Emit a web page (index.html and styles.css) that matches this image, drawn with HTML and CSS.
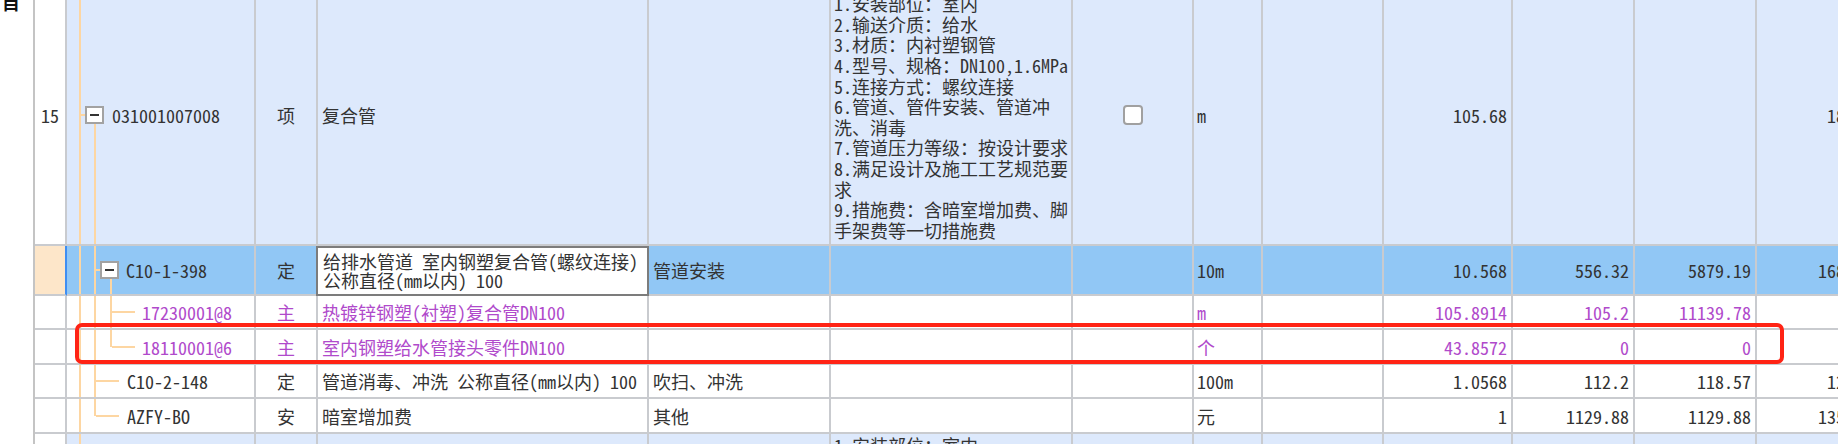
FILE: index.html
```html
<!DOCTYPE html>
<html lang="zh-CN">
<head>
<meta charset="utf-8">
<title>清单</title>
<link rel="stylesheet" href="styles.css">
</head>
<body>
<div class="page">
  <div class="side"><div class="side-title">目</div></div>
  <div class="table">
    <div class="row row-item">
      <div class="cell num">15</div>
      <div class="cell code tree-15"><span class="exp"></span><span>031001007008</span></div>
      <div class="cell type">项</div>
      <div class="cell">复合管</div>
      <div class="cell"></div>
      <div class="cell feat">
        <div>1.安装部位：室内</div>
        <div>2.输送介质：给水</div>
        <div>3.材质：内衬塑钢管</div>
        <div>4.型号、规格：DN100,1.6MPa</div>
        <div>5.连接方式：螺纹连接</div>
        <div>6.管道、管件安装、管道冲</div>
        <div>洗、消毒</div>
        <div>7.管道压力等级：按设计要求</div>
        <div>8.满足设计及施工工艺规范要</div>
        <div>求</div>
        <div>9.措施费：含暗室增加费、脚</div>
        <div>手架费等一切措施费</div>
      </div>
      <div class="cell chk"><span class="box"></span></div>
      <div class="cell unit">m</div>
      <div class="cell"></div>
      <div class="cell n">105.68</div>
      <div class="cell n"></div>
      <div class="cell n"></div>
      <div class="cell n">183.46</div>
    </div>

    <div class="row row-sel">
      <div class="cell num"></div>
      <div class="cell code tree-sel"><span class="exp"></span><span>C10-1-398</span></div>
      <div class="cell type">定</div>
      <div class="cell edit"><div>给排水管道 室内钢塑复合管(螺纹连接)<br>公称直径(mm以内) 100</div></div>
      <div class="cell">管道安装</div>
      <div class="cell"></div>
      <div class="cell"></div>
      <div class="cell unit">10m</div>
      <div class="cell"></div>
      <div class="cell n">10.568</div>
      <div class="cell n">556.32</div>
      <div class="cell n">5879.19</div>
      <div class="cell n">1683.52</div>
    </div>

    <div class="row row-sub h34 purple">
      <div class="cell num"></div>
      <div class="cell code tree-m1">17230001@8</div>
      <div class="cell type">主</div>
      <div class="cell">热镀锌钢塑(衬塑)复合管DN100</div>
      <div class="cell"></div>
      <div class="cell"></div>
      <div class="cell"></div>
      <div class="cell unit">m</div>
      <div class="cell"></div>
      <div class="cell n">105.8914</div>
      <div class="cell n">105.2</div>
      <div class="cell n">11139.78</div>
      <div class="cell n"></div>
    </div>

    <div class="row row-sub h35 purple">
      <div class="cell num"></div>
      <div class="cell code tree-m2">18110001@6</div>
      <div class="cell type">主</div>
      <div class="cell">室内钢塑给水管接头零件DN100</div>
      <div class="cell"></div>
      <div class="cell"></div>
      <div class="cell"></div>
      <div class="cell unit">个</div>
      <div class="cell"></div>
      <div class="cell n">43.8572</div>
      <div class="cell n">0</div>
      <div class="cell n">0</div>
      <div class="cell n"></div>
    </div>

    <div class="row row-sub h34">
      <div class="cell num"></div>
      <div class="cell code tree-d1">C10-2-148</div>
      <div class="cell type">定</div>
      <div class="cell">管道消毒、冲洗 公称直径(mm以内) 100</div>
      <div class="cell">吹扫、冲洗</div>
      <div class="cell"></div>
      <div class="cell"></div>
      <div class="cell unit">100m</div>
      <div class="cell"></div>
      <div class="cell n">1.0568</div>
      <div class="cell n">112.2</div>
      <div class="cell n">118.57</div>
      <div class="cell n">124.85</div>
    </div>

    <div class="row row-sub h35">
      <div class="cell num"></div>
      <div class="cell code tree-d2">AZFY-BO</div>
      <div class="cell type">安</div>
      <div class="cell">暗室增加费</div>
      <div class="cell">其他</div>
      <div class="cell"></div>
      <div class="cell"></div>
      <div class="cell unit">元</div>
      <div class="cell"></div>
      <div class="cell n">1</div>
      <div class="cell n">1129.88</div>
      <div class="cell n">1129.88</div>
      <div class="cell n">1355.86</div>
    </div>

    <div class="row row-next">
      <div class="cell num"></div>
      <div class="cell code tree-v"></div>
      <div class="cell type"></div>
      <div class="cell"></div>
      <div class="cell"></div>
      <div class="cell feat top">
        <div>1.安装部位：室内</div>
        <div>2.输送介质：给水</div>
      </div>
      <div class="cell"></div>
      <div class="cell unit"></div>
      <div class="cell"></div>
      <div class="cell n"></div>
      <div class="cell n"></div>
      <div class="cell n"></div>
      <div class="cell n"></div>
    </div>

    <div class="mark"></div>
  </div>
</div>
</body>
</html>
```

FILE: styles.css
```css
html, body {
  margin: 0;
  padding: 0;
  width: 1838px;
  height: 444px;
  overflow: hidden;
  background: #ffffff;
}

.page {
  display: flex;
  align-items: flex-start;
  font-family: "Noto Sans Mono CJK SC", "Noto Sans CJK SC", sans-serif;
  font-size: 18px;
  color: #333333;
}

.side {
  width: 33px;
  height: 444px;
  flex: none;
  border-right: 2px solid #c4c4c4;
  background: #ffffff;
  overflow: hidden;
}

.side-title {
  margin: -7px 0 0 2px;
  font-weight: bold;
  line-height: 18px;
  color: #111111;
}

.table {
  position: relative;
  margin-top: -14px;
  flex: none;
}

.row {
  display: grid;
  grid-template-columns: 32px 189px 62px 331px 182px 242px 121px 69px 121px 129px 122px 122px 130px;
}

.cell {
  box-sizing: border-box;
  display: flex;
  align-items: center;
  padding: 0 4px;
  border-right: 2px solid #c9cbcf;
  border-bottom: 2px solid #c9cbcf;
  white-space: nowrap;
  overflow: hidden;
  min-width: 0;
}

.num {
  justify-content: center;
  padding: 0;
  background: #ffffff;
}

.type {
  justify-content: center;
  padding: 0;
}

.unit {
  padding-left: 3px;
}

.n {
  justify-content: flex-end;
  padding-right: 4px;
}

.chk {
  justify-content: center;
}

.box {
  width: 20px;
  height: 20px;
  box-sizing: border-box;
  border: 2px solid #a0a0a0;
  border-radius: 4px;
  background: #ffffff;
}

.feat {
  flex-direction: column;
  justify-content: space-between;
  align-items: flex-start;
  padding: 7px 3px 4px 3px;
  line-height: 20px;
}

.feat > div {
  height: 20px;
}

.feat.top {
  justify-content: flex-start;
  gap: 0.67px;
  padding-top: 1px;
}

/* rows */
.row-item {
  height: 260px;
  background: #dde9fc;
}

.row-sel {
  height: 50px;
  background: #91c7f5;
}

.row-sel .num {
  background: #fde6c9;
  border-right-color: #3f8ef2;
}

.row-sub {
  background: #ffffff;
}

.h34 { height: 34px; }
.h35 { height: 35px; }

.row-next {
  height: 260px;
  background: #dde9fc;
}

.purple .cell {
  color: #b04acb;
}

/* editing cell */
.edit {
  margin-left: -2px;
  border: 2px solid #7c7c7c;
  background: #ffffff;
  line-height: 19.5px;
  padding: 0 4px 0 5px;
}

/* tree */
.code {
  --t: #fdd6a2;
  padding: 0;
}

.exp {
  flex: none;
  width: 19px;
  height: 18px;
  box-sizing: border-box;
  border: 2px solid #a2a2a2;
  background: #ffffff;
  display: flex;
  align-items: center;
  justify-content: center;
}

.exp::before {
  content: "";
  width: 9px;
  height: 2px;
  background: #333333;
}

.tree-15 {
  padding-left: 18px;
  gap: 8px;
  background:
    linear-gradient(var(--t), var(--t)) 12px 0 / 2px 100% no-repeat,
    linear-gradient(var(--t), var(--t)) 14px 50% / 5px 2px no-repeat,
    linear-gradient(var(--t), var(--t)) 27px 100% / 2px 50% no-repeat,
    #dde9fc;
}

.tree-sel {
  padding-left: 33px;
  gap: 7px;
  background:
    linear-gradient(var(--t), var(--t)) 12px 0 / 2px 100% no-repeat,
    linear-gradient(var(--t), var(--t)) 27px 0 / 2px 100% no-repeat,
    linear-gradient(var(--t), var(--t)) 29px 50% / 5px 2px no-repeat,
    linear-gradient(var(--t), var(--t)) 43px 100% / 2px 50% no-repeat,
    #91c7f5;
}

.tree-m1 {
  padding-left: 75px;
  background:
    linear-gradient(var(--t), var(--t)) 12px 0 / 2px 100% no-repeat,
    linear-gradient(var(--t), var(--t)) 27px 0 / 2px 100% no-repeat,
    linear-gradient(var(--t), var(--t)) 43px 0 / 2px 100% no-repeat,
    linear-gradient(var(--t), var(--t)) 45px 50% / 23px 2px no-repeat,
    #ffffff;
}

.tree-m2 {
  padding-left: 75px;
  background:
    linear-gradient(var(--t), var(--t)) 12px 0 / 2px 100% no-repeat,
    linear-gradient(var(--t), var(--t)) 27px 0 / 2px 100% no-repeat,
    linear-gradient(var(--t), var(--t)) 43px 0 / 2px 52% no-repeat,
    linear-gradient(var(--t), var(--t)) 45px 50% / 23px 2px no-repeat,
    #ffffff;
}

.tree-d1 {
  padding-left: 60px;
  background:
    linear-gradient(var(--t), var(--t)) 12px 0 / 2px 100% no-repeat,
    linear-gradient(var(--t), var(--t)) 27px 0 / 2px 100% no-repeat,
    linear-gradient(var(--t), var(--t)) 29px 50% / 23px 2px no-repeat,
    #ffffff;
}

.tree-d2 {
  padding-left: 60px;
  background:
    linear-gradient(var(--t), var(--t)) 12px 0 / 2px 100% no-repeat,
    linear-gradient(var(--t), var(--t)) 27px 0 / 2px 52% no-repeat,
    linear-gradient(var(--t), var(--t)) 29px 50% / 23px 2px no-repeat,
    #ffffff;
}

.tree-v {
  background:
    linear-gradient(var(--t), var(--t)) 12px 0 / 2px 100% no-repeat,
    #dde9fc;
}

/* red highlight frame */
.mark {
  position: absolute;
  left: 40px;
  top: 337px;
  width: 1709px;
  height: 41px;
  box-sizing: border-box;
  border: 4px solid #ff2314;
  border-radius: 7px;
  pointer-events: none;
}
```
